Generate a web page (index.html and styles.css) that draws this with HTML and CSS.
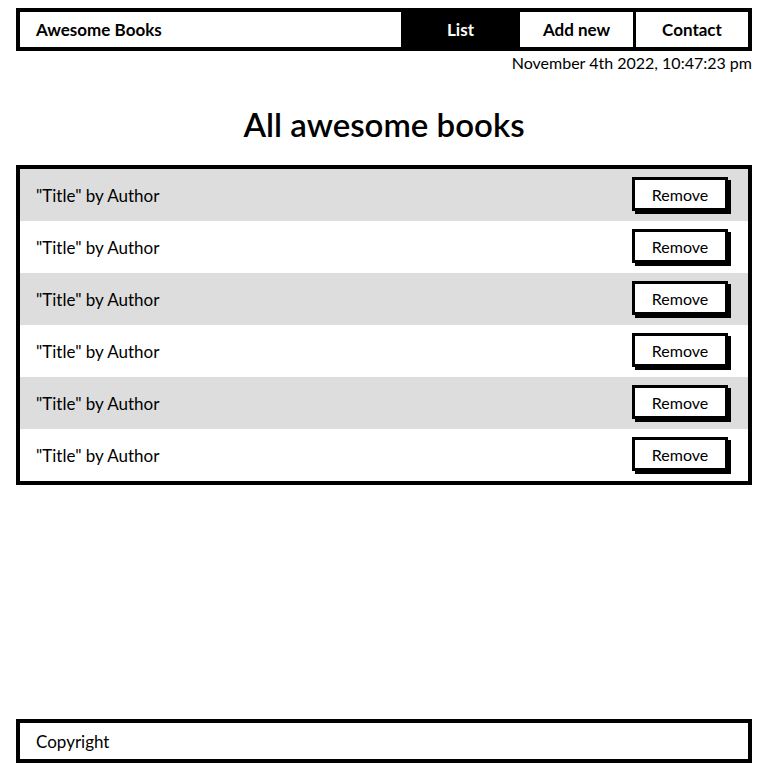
FILE: index.html
```html
<!DOCTYPE html>
<html lang="en">
  <head>
    <meta charset="UTF-8" />
    <meta name="viewport" content="width=device-width, initial-scale=1.0" />
    <title>Awesome Books</title>
    <link rel="stylesheet" href="styles.css">
  </head>
  <body>
    <header class="navbar">
      <div class="brand">Awesome Books</div>
      <nav class="nav-links">
        <a href="#" class="nav-link active">List</a>
        <a href="#" class="nav-link">Add new</a>
        <a href="#" class="nav-link">Contact</a>
      </nav>
    </header>
    <p class="date">November 4th 2022, 10:47:23 pm</p>

    <main>
      <h1 class="title">All awesome books</h1>
      <ul class="books">
        <li class="book"><span>"Title" by Author</span><button class="remove">Remove</button></li>
        <li class="book"><span>"Title" by Author</span><button class="remove">Remove</button></li>
        <li class="book"><span>"Title" by Author</span><button class="remove">Remove</button></li>
        <li class="book"><span>"Title" by Author</span><button class="remove">Remove</button></li>
        <li class="book"><span>"Title" by Author</span><button class="remove">Remove</button></li>
        <li class="book"><span>"Title" by Author</span><button class="remove">Remove</button></li>
      </ul>
    </main>

    <footer class="footer">Copyright</footer>
  </body>
</html>
```

FILE: styles.css
```css
* {
  box-sizing: border-box;
}

body {
  margin: 0;
  padding: 8px 16px;
  min-height: 100vh;
  display: flex;
  flex-direction: column;
  font-family: Lato, "Noto Sans", sans-serif;
  font-size: 17px;
  color: #000;
  background-color: #fff;
}

.navbar {
  display: flex;
  height: 43px;
  border: 4px solid #000;
}

.brand {
  flex: 1;
  display: flex;
  align-items: center;
  padding-left: 16px;
  font-weight: bold;
}

.nav-links {
  display: flex;
}

.nav-link {
  width: 116px;
  display: flex;
  align-items: center;
  justify-content: center;
  border-left: 3px solid #000;
  color: #000;
  font-weight: bold;
  text-decoration: none;
}

.nav-link.active {
  background-color: #000;
  color: #fff;
}

.nav-link:last-child {
  width: 115px;
}

.date {
  margin: 2px 0 0;
  text-align: right;
  font-size: 16px;
  line-height: 20px;
}

.title {
  margin: 31px 0 21px;
  text-align: center;
  font-size: 33px;
  font-weight: 600;
  line-height: 40px;
}

.books {
  list-style: none;
  margin: 0;
  padding: 0;
  border: 4px solid #000;
}

.book {
  height: 52px;
  display: flex;
  align-items: center;
  justify-content: space-between;
  padding: 0 20px 0 16px;
}

.book:nth-child(odd) {
  background-color: #ddd;
}

.remove {
  width: 96px;
  height: 34px;
  margin-top: -2px;
  border: 3px solid #000;
  background-color: #fff;
  box-shadow: 3px 3px 0 #000;
  font-family: Lato, "Noto Sans", sans-serif;
  font-size: 16px;
  color: #000;
  cursor: pointer;
}

.footer {
  margin-top: auto;
  height: 44px;
  display: flex;
  align-items: center;
  padding-left: 16px;
  border: 4px solid #000;
}
```
